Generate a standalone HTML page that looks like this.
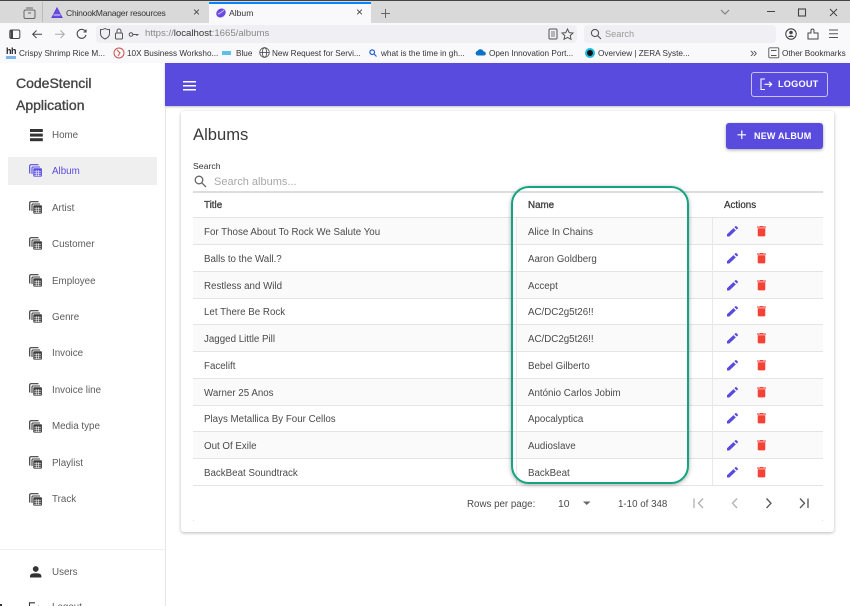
<!DOCTYPE html>
<html><head><meta charset="utf-8"><title>Album</title>
<style>
*{box-sizing:border-box}
html{margin:0;padding:0;background:#fff;width:850px;height:606px;overflow:hidden}
body{margin:0;padding:0;background:#fff;width:850px;height:606px;overflow:hidden;position:relative;font-family:"Liberation Sans",sans-serif;color:#444}
.a{position:absolute;white-space:nowrap}
.tb{font-size:8.7px;color:#333;line-height:12px}
.bm{font-size:8.2px;line-height:13px;color:#333;top:47px}
.nav{font-size:9.8px;color:#5c5c5c;left:52px;line-height:14px;margin-top:2px}
.c{font-size:9.75px;color:#4a4a4a;line-height:14px;margin-top:2px}
.h{font-size:9.8px;color:#444;line-height:14px;margin-top:1px;-webkit-text-stroke:.35px #444}
.line{position:absolute;left:193px;width:630px;height:1px;background:#e4e4e4}
.strip{position:absolute;left:193px;width:630px;height:26px;background:#fafafa}
svg{position:absolute;overflow:visible}
</style></head><body>
<svg width="0" height="0" style="position:absolute"><defs>
<g id="tbl" fill="none" stroke="currentColor"><path d="M9.5 .7H2.2Q.7 .7 .7 2.2V9.5" stroke-width="1.2"/><path d="M3 10V4Q3 3 4 3H11" stroke-width="1.1"/><rect x="4.3" y="4.3" width="8.6" height="8.3" rx=".8" fill="currentColor" stroke="none"/><path d="M5.2 7.2H12M5.2 9.2H12M5.2 11.2H12M7.2 6.200V12M9.6 6.200V12" stroke="#fff" stroke-width=".6"/></g>
<g id="pen" transform="translate(0 1) scale(.92 .88)"><path fill="#5a4bdf" d="M0 9.4V12H2.6L9.6 5 7 2.4ZM11.8 2.8a.7.7 0 0 0 0-1L10.2.2a.7.7 0 0 0-1 0L8 1.4 10.6 4Z"/></g>
<g id="bin" transform="translate(1 .8) scale(.92 .84)"><path fill="#f44336" d="M.8 2.9H9V11.4Q9 12.6 7.8 12.6H2Q.8 12.6 .8 11.4ZM0 .9H2.7L3.4.2H6.4L7.1.9H9.8V2.1H0Z"/></g>
</defs></svg>

<!-- browser chrome -->
<div class="a" style="left:0;top:0;width:850px;height:23px;background:#d9d9d9;border-top:1px solid #444"></div>
<div class="a" style="left:0;top:23px;width:850px;height:40px;background:#f9f9fb"></div>
<div class="a" style="left:42px;top:2px;width:1px;height:20px;background:#bbb"></div>
<div class="a" style="left:209px;top:2px;width:162px;height:21px;background:#f9f9fb;border-top:2px solid #0a84ff"></div>
<svg style="left:23px;top:7px" width="14" height="13" fill="none" stroke="#666" stroke-width="1"><rect x="1" y="3" width="11" height="8.5" rx="1.5"/><path d="M3 1H10M5 6H8"/></svg>
<svg style="left:51px;top:7px" width="12" height="12"><path d="M6 1L11 10.5H1Z" fill="#6a4be0" stroke="#5a3fd8"/><path d="M2.5 8H9.5" stroke="#fff" stroke-width=".8"/></svg>
<div class="a" style="left:66px;top:6px;font-size:8.6px;letter-spacing:-.25px;line-height:14px;color:#333">ChinookManager resources</div>
<div class="a" style="left:193px;top:5px;font-size:12px;line-height:14px;color:#444">×</div>
<svg style="left:215px;top:7px" width="12" height="12"><ellipse cx="6" cy="6" rx="5" ry="4.2" fill="#6a4be0" transform="rotate(-35 6 6)"/><path d="M3 7Q6 6 9 3" stroke="#c8bcf5" fill="none"/></svg>
<div class="a" style="left:229px;top:6px;font-size:8.6px;line-height:14px;color:#333">Album</div>
<div class="a" style="left:356px;top:5px;font-size:12px;line-height:14px;color:#444">×</div>
<svg style="left:380px;top:8px" width="11" height="11" stroke="#666"><path d="M5.500 1V10M1 5.500H10"/></svg>
<svg style="left:720px;top:8px" width="120" height="11" fill="none" stroke="#444"><path d="M1 2L5 6 9 2" stroke="#777"/><path d="M47 3.500H55"/><rect x="78.500" y="1" width="7" height="7" stroke-width="1.100"/><path d="M110 1L117 8M117 1L110 8"/></svg>

<svg style="left:9px;top:28px" width="85" height="13" fill="none" stroke="#444"><rect x=".8" y="2" width="10" height="8.500" rx="1.500"/><rect x="1.500" y="2.500" width="2.500" height="7.500" fill="#444" stroke="none"/><path d="M33 6.300H24M27.500 2.500L23.700 6.300 27.500 10"/><path d="M46 6.300H55M51.500 2.500L55.300 6.300 51.500 10" stroke="#aaa"/><path d="M76.500 3.500A4.500 4.500 0 1 0 77 7M77 1.500V4H74.500" stroke-width="1.100"/></svg>
<div class="a" style="left:96px;top:25px;width:481px;height:18px;background:#f0f0f4;border-radius:4px"></div>
<svg style="left:100px;top:27px" width="40" height="14" fill="none" stroke="#555"><path d="M4.500 2Q7 3.500 9 3V7Q9 10.500 4.500 12.500 0 10.500 0 7V3Q2 3.500 4.500 2Z" stroke-width="1" transform="translate(.5 -.5)"/><rect x="15.500" y="6" width="7" height="6" rx="1"/><path d="M17 6V4A2 2 0 0 1 21 4V6"/><circle cx="31" cy="7.500" r="1.800"/><path d="M33 7.500H38.500M37 7.500V9"/></svg>
<div class="a" style="left:145px;top:27px;font-size:9.6px;line-height:14px;color:#888">https://<span style="color:#333">localhost</span>:1665/albums</div>
<svg style="left:548px;top:27px" width="27" height="14" fill="none" stroke="#555"><rect x="1" y="2" width="8" height="10" rx="1"/><path d="M3 5H7M3 7H7M3 9H7" stroke-width=".8"/><path d="M19.500 2L21.200 5.600 25 6 22.200 8.600 23 12.300 19.500 10.400 16 12.300 16.800 8.600 14 6 17.800 5.600Z"/></svg>
<div class="a" style="left:584px;top:25px;width:192px;height:18px;background:#f0f0f4;border-radius:4px"></div>
<svg style="left:590px;top:28px" width="12" height="12" fill="none" stroke="#555" stroke-width="1.100"><circle cx="5" cy="5" r="3.600"/><path d="M7.700 7.700L11 11"/></svg>
<div class="a" style="left:605px;top:27px;font-size:9.2px;line-height:14px;color:#999">Search</div>
<svg style="left:785px;top:27px" width="56" height="14" fill="none" stroke="#444"><circle cx="6" cy="7" r="5.200" stroke-width="1.100"/><circle cx="6" cy="5.500" r="1.800" fill="#444" stroke="none"/><path d="M2.800 10Q6 6.500 9.200 10" fill="#444" stroke="none"/><path d="M23 6H26V3.500Q26 2 27.500 2T29 3.500V6H33V12H23Z" stroke-width="1"/><path d="M44 3H53M44 6.800H53M44 10.500H53" stroke="#555"/></svg>

<div class="a" style="left:6px;top:46px;font-size:9px;font-weight:bold;line-height:10px;color:#222;letter-spacing:-.5px">hh</div>
<div class="a" style="left:6px;top:56px;width:10px;height:3px;background:#7ab4ea"></div>
<div class="a bm" style="left:19px">Crispy Shrimp Rice M...</div>
<svg style="left:113px;top:47px" width="12" height="12" fill="none"><circle cx="6" cy="6" r="5" stroke="#c8524a"/><path d="M4 3L7 6 5 9" stroke="#c8524a"/></svg>
<div class="a bm" style="left:127px">10X Business Worksho...</div>
<div class="a" style="left:222px;top:51px;width:9px;height:4px;background:#5cc0e8"></div>
<div class="a bm" style="left:236px">Blue</div>
<svg style="left:259px;top:47px" width="11" height="11" fill="none" stroke="#444" stroke-width=".8"><circle cx="5.500" cy="5.500" r="4.800"/><ellipse cx="5.500" cy="5.500" rx="2.200" ry="4.800"/><path d="M.7 5.500H10.300"/></svg>
<div class="a bm" style="left:272px">New Request for Servi...</div>
<svg style="left:369px;top:49px" width="8" height="8" fill="none" stroke="#2060d0" stroke-width="1.200"><circle cx="3.200" cy="3.200" r="2.300"/><path d="M5 5L7.500 7.500"/></svg>
<div class="a bm" style="left:381px">what is the time in gh...</div>
<svg style="left:475px;top:48px" width="11" height="8"><path d="M2.500 7.500A2.300 2.300 0 0 1 2.500 3 3.300 3.300 0 0 1 8.500 3.500 2 2 0 0 1 9 7.500Z" fill="#0a70c8"/></svg>
<div class="a bm" style="left:489px">Open Innovation Port...</div>
<div class="a" style="left:585px;top:48px;width:10px;height:10px;border-radius:50%;background:#111;border:2px solid #18bde0"></div>
<div class="a bm" style="left:598px">Overview | ZERA Syste...</div>
<div class="a" style="left:750px;top:45px;font-size:13px;line-height:15px;color:#555">»</div>
<svg style="left:768px;top:47px" width="12" height="12" fill="none" stroke="#555" stroke-width=".9"><rect x=".8" y=".8" width="10" height="10" rx="1"/><path d="M3 3.500H8.500M3 8.500H8.500"/></svg>
<div class="a bm" style="left:782px">Other Bookmarks</div>

<!-- app bar -->
<div class="a" style="left:165px;top:63px;width:685px;height:43px;background:#5a4bdf;box-shadow:0 1px 2px rgba(0,0,0,.25)"></div>
<svg style="left:183px;top:80.500px" width="14" height="11" fill="#fff"><rect y="0" width="13" height="1.500"/><rect y="4" width="13" height="1.500"/><rect y="8" width="13" height="1.500"/></svg>
<div class="a" style="left:751px;top:72px;width:77px;height:25px;border:1px solid #c9c3f5;border-radius:3px"></div>
<svg style="left:760px;top:78px" width="13" height="13" fill="none" stroke="#fff" stroke-width="1.100"><path d="M5 1H1V11.500H5"/><path d="M4.500 6.300H11.500M9 3.800L11.700 6.300 9 8.800"/></svg>
<div class="a" style="left:778px;top:78px;font-size:9.2px;font-weight:bold;line-height:13px;color:#fff;letter-spacing:.2px">LOGOUT</div>

<!-- sidebar -->
<div class="a" style="left:165px;top:106px;width:1px;height:500px;background:#e6e6e6"></div>
<div class="a" style="left:16px;top:72px;font-size:14px;line-height:22px;color:#444;-webkit-text-stroke:.35px #444">CodeStencil<br>Application</div>
<div class="a" style="left:8px;top:157px;width:149px;height:28px;background:#efefef"></div>
<svg style="left:29.500px;top:128.500px" width="13" height="13" fill="#333"><rect width="12.800" height="3"/><rect y="4.600" width="12.800" height="3"/><rect y="9.200" width="12.800" height="3"/></svg>
<div class="a nav" style="top:127px">Home</div>
<svg style="left:29px;top:164px;color:#5a4bdf" width="14" height="14"><use href="#tbl"/></svg>
<div class="a nav" style="top:163px;color:#5a4bdf">Album</div>
<svg style="left:29px;top:201px;color:#3c3c3c" width="14" height="14"><use href="#tbl"/></svg>
<div class="a nav" style="top:200px">Artist</div>
<svg style="left:29px;top:237px;color:#3c3c3c" width="14" height="14"><use href="#tbl"/></svg>
<div class="a nav" style="top:236px">Customer</div>
<svg style="left:29px;top:274px;color:#3c3c3c" width="14" height="14"><use href="#tbl"/></svg>
<div class="a nav" style="top:273px">Employee</div>
<svg style="left:29px;top:310px;color:#3c3c3c" width="14" height="14"><use href="#tbl"/></svg>
<div class="a nav" style="top:309px">Genre</div>
<svg style="left:29px;top:347px;color:#3c3c3c" width="14" height="14"><use href="#tbl"/></svg>
<div class="a nav" style="top:345px">Invoice</div>
<svg style="left:29px;top:383px;color:#3c3c3c" width="14" height="14"><use href="#tbl"/></svg>
<div class="a nav" style="top:382px">Invoice line</div>
<svg style="left:29px;top:420px;color:#3c3c3c" width="14" height="14"><use href="#tbl"/></svg>
<div class="a nav" style="top:418px">Media type</div>
<svg style="left:29px;top:456px;color:#3c3c3c" width="14" height="14"><use href="#tbl"/></svg>
<div class="a nav" style="top:455px">Playlist</div>
<svg style="left:29px;top:493px;color:#3c3c3c" width="14" height="14"><use href="#tbl"/></svg>
<div class="a nav" style="top:491px">Track</div>
<div class="a" style="left:0;top:549px;width:165px;height:1px;background:#f0f0f0"></div>
<svg style="left:30px;top:566px" width="12" height="12" fill="#333"><circle cx="5.700" cy="3" r="2.900"/><path d="M0 11.500V10Q0 7.300 5.700 7.300T11.400 10V11.500Z"/></svg>
<div class="a nav" style="top:564px">Users</div>
<svg style="left:29px;top:602px" width="13" height="4" fill="none" stroke="#333" stroke-width="1.100"><path d="M.5 4V.8H6M9 4L11 5.500"/></svg>
<div class="a nav" style="top:599px">Logout</div>
<div class="a" style="left:0;top:604px;width:2px;height:2px;background:#333"></div>

<!-- card -->
<div class="a" style="left:181px;top:111px;width:653px;height:421px;background:#fff;border-radius:3px;box-shadow:0 1px 3px rgba(0,0,0,.28)"></div>
<div class="a" style="left:193px;top:124px;font-size:16.6px;line-height:21px;color:#3a3a3a">Albums</div>
<div class="a" style="left:726px;top:123px;width:97px;height:26px;background:#5a4bdf;border-radius:3px;box-shadow:0 1px 3px rgba(0,0,0,.35)"></div>
<svg style="left:737px;top:130px" width="10" height="10" stroke="#fff" stroke-width="1.200"><path d="M4.800 .5V9M.5 4.800H9"/></svg>
<div class="a" style="left:754px;top:130px;font-size:9px;font-weight:bold;line-height:13px;color:#fff;letter-spacing:.2px">NEW ALBUM</div>
<div class="a tb" style="left:193px;top:160px">Search</div>
<svg style="left:194px;top:175px" width="13" height="13" fill="none" stroke="#666" stroke-width="1.300"><circle cx="5" cy="5" r="3.800"/><path d="M7.800 7.800L12 12"/></svg>
<div class="a" style="left:214px;top:175px;font-size:11px;line-height:14px;color:#a8a8a8">Search albums...</div>

<div class="a" style="left:193px;top:191px;width:630px;height:2px;background:#ddd"></div>
<div class="a h" style="left:204px;top:198px">Title</div>
<div class="a h" style="left:528px;top:198px">Name</div>
<div class="a h" style="left:724px;top:198px;-webkit-text-stroke:.2px #333;color:#333">Actions</div>

<div class="strip" style="top:218px"></div>
<div class="strip" style="top:272px"></div>
<div class="strip" style="top:325px"></div>
<div class="strip" style="top:379px"></div>
<div class="strip" style="top:432px"></div>
<div class="line" style="top:217px"></div>
<div class="line" style="top:244px"></div>
<div class="line" style="top:271px"></div>
<div class="line" style="top:298px"></div>
<div class="line" style="top:324px"></div>
<div class="line" style="top:351px"></div>
<div class="line" style="top:378px"></div>
<div class="line" style="top:405px"></div>
<div class="line" style="top:431px"></div>
<div class="line" style="top:458px"></div>
<div class="line" style="top:485px"></div>
<div class="a" style="left:516px;top:218px;width:1px;height:267px;background:#e8e8e8"></div>
<div class="a" style="left:712px;top:218px;width:1px;height:267px;background:#e8e8e8"></div>

<div class="a c" style="left:204px;top:224px">For Those About To Rock We Salute You</div>
<div class="a c" style="left:204px;top:251px">Balls to the Wall.?</div>
<div class="a c" style="left:204px;top:278px">Restless and Wild</div>
<div class="a c" style="left:204px;top:304px">Let There Be Rock</div>
<div class="a c" style="left:204px;top:331px">Jagged Little Pill</div>
<div class="a c" style="left:204px;top:358px">Facelift</div>
<div class="a c" style="left:204px;top:385px">Warner 25 Anos</div>
<div class="a c" style="left:204px;top:411px">Plays Metallica By Four Cellos</div>
<div class="a c" style="left:204px;top:438px">Out Of Exile</div>
<div class="a c" style="left:204px;top:465px">BackBeat Soundtrack</div>

<div class="a c" style="left:528px;top:224px">Alice In Chains</div>
<div class="a c" style="left:528px;top:251px">Aaron Goldberg</div>
<div class="a c" style="left:528px;top:278px">Accept</div>
<div class="a c" style="left:528px;top:304px">AC/DC2g5t26!!</div>
<div class="a c" style="left:528px;top:331px">AC/DC2g5t26!!</div>
<div class="a c" style="left:528px;top:358px">Bebel Gilberto</div>
<div class="a c" style="left:528px;top:385px">António Carlos Jobim</div>
<div class="a c" style="left:528px;top:411px">Apocalyptica</div>
<div class="a c" style="left:528px;top:438px">Audioslave</div>
<div class="a c" style="left:528px;top:465px">BackBeat</div>

<svg style="left:727px;top:225px" width="12" height="12"><use href="#pen"/></svg><svg style="left:756px;top:225px" width="11" height="13"><use href="#bin"/></svg>
<svg style="left:727px;top:252px" width="12" height="12"><use href="#pen"/></svg><svg style="left:756px;top:252px" width="11" height="13"><use href="#bin"/></svg>
<svg style="left:727px;top:279px" width="12" height="12"><use href="#pen"/></svg><svg style="left:756px;top:279px" width="11" height="13"><use href="#bin"/></svg>
<svg style="left:727px;top:305px" width="12" height="12"><use href="#pen"/></svg><svg style="left:756px;top:305px" width="11" height="13"><use href="#bin"/></svg>
<svg style="left:727px;top:332px" width="12" height="12"><use href="#pen"/></svg><svg style="left:756px;top:332px" width="11" height="13"><use href="#bin"/></svg>
<svg style="left:727px;top:359px" width="12" height="12"><use href="#pen"/></svg><svg style="left:756px;top:359px" width="11" height="13"><use href="#bin"/></svg>
<svg style="left:727px;top:386px" width="12" height="12"><use href="#pen"/></svg><svg style="left:756px;top:386px" width="11" height="13"><use href="#bin"/></svg>
<svg style="left:727px;top:412px" width="12" height="12"><use href="#pen"/></svg><svg style="left:756px;top:412px" width="11" height="13"><use href="#bin"/></svg>
<svg style="left:727px;top:439px" width="12" height="12"><use href="#pen"/></svg><svg style="left:756px;top:439px" width="11" height="13"><use href="#bin"/></svg>
<svg style="left:727px;top:466px" width="12" height="12"><use href="#pen"/></svg><svg style="left:756px;top:466px" width="11" height="13"><use href="#bin"/></svg>

<!-- highlight -->
<div class="a" style="left:511px;top:186px;width:178px;height:298px;border:2px solid #12a383;border-radius:18px;box-shadow:0 1px 4px rgba(0,0,0,.35)"></div>

<!-- pagination -->
<div class="a c" style="left:467px;top:496px">Rows per page:</div>
<div class="a c" style="left:558px;top:496px;font-size:10.400px">10</div>
<svg style="left:583px;top:501px" width="8" height="5"><path d="M0 .5H7.500L3.750 4Z" fill="#666"/></svg>
<div class="a c" style="left:618px;top:496px">1-10 of 348</div>
<svg style="left:693px;top:497px" width="120" height="13" fill="none" stroke-width="1.300"><path d="M1 1.500V11M10 1.500L5.500 6.300 10 11" stroke="#b0b0b0"/><path d="M44 1.500L39.500 6.300 44 11" stroke="#b0b0b0"/><path d="M73.500 1.500L78 6.300 73.500 11" stroke="#555"/><path d="M107 1.500L111.500 6.300 107 11M115 1.500V11" stroke="#555"/></svg>
<div class="a" style="left:193px;top:520px;width:1px;height:1px;background:#ddd"></div>
<div class="a" style="left:822px;top:520px;width:1px;height:1px;background:#ddd"></div>
</body></html>
